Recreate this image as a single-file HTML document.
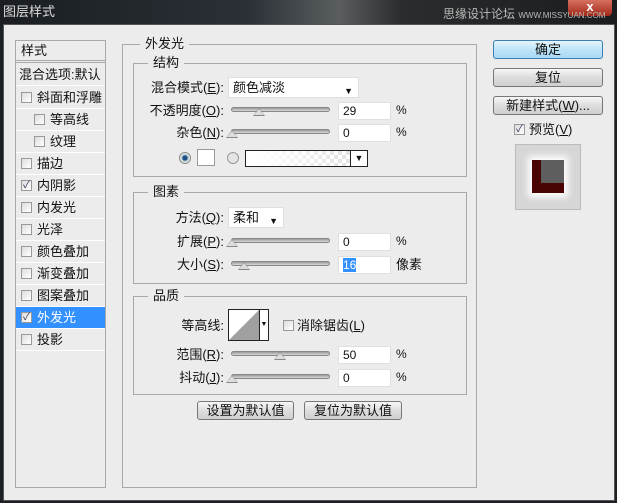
<!DOCTYPE html>
<html><head><meta charset="utf-8"><style>
*{box-sizing:border-box;margin:0;padding:0}
body{width:617px;height:503px;overflow:hidden;background:#1c2024;font-family:"Liberation Sans","Noto Sans CJK SC",sans-serif;font-size:13px;line-height:15px;color:#111;position:relative}
.a{position:absolute}
.title{left:0;top:0;width:617px;height:26px;background:linear-gradient(90deg,#1a1e22 0,#2a3036 40%,#5a5e60 55%,#2a2c2e 65%,#1a1c1e 100%)}
.dlg{left:3px;top:24px;width:612px;height:477px;background:#ececec;border:1px solid #555}
.gb{border:1px solid #a8a8a8}
.lbl{background:#ececec;padding:0 5px;line-height:14px}
.in{background:#fff;border:1px solid #e0e0e0;height:18px;line-height:17px;padding-left:4px;font-size:12px}
.sl{height:5px;border-radius:3px;background:linear-gradient(#9a9a9a,#d8d8d8);border:1px solid #888}
.th{width:0;height:0;border-left:6px solid transparent;border-right:6px solid transparent;border-bottom:8px solid #888}
.th:after{content:"";position:absolute;left:-5px;top:1px;border-left:5px solid transparent;border-right:5px solid transparent;border-bottom:6px solid #ddd}
.cb{width:11px;height:11px;border:1px solid #999;background:linear-gradient(135deg,#ddd,#fff);font-size:10px;line-height:9px;text-align:center;color:#335}
.row{left:0;width:89px;height:22px;border-bottom:1px solid #fff;line-height:22px}
.btn{border:1px solid #777;border-radius:3px;background:linear-gradient(#f6f6f6,#ddd 50%,#cfcfcf);text-align:center;line-height:17px;height:19px}
.r{text-align:right}
</style></head><body>
<div class="a title"></div>
<div class="a" style="left:3px;top:4px;color:#ddd;font-size:13px">图层样式</div>
<div class="a" style="left:568px;top:0;width:44px;height:16px;background:linear-gradient(#d87060,#a02818);border-radius:0 0 4px 4px;color:#fff;text-align:center;font-weight:bold;line-height:14px">x</div>
<div class="a" style="left:443px;top:7px;color:#bbb;font-size:12px">思缘设计论坛 <span style="font-size:8px">WWW.MISSYUAN.COM</span></div>
<div class="a dlg"></div>

<!-- left list -->
<div class="a gb" style="left:15px;top:40px;width:91px;height:448px;background:#ececec">
 <div class="a" style="left:0;top:0;width:89px;height:22px;line-height:20px;padding-left:5px;border-bottom:3px double #aaa">样式</div>
 <div class="a row" style="top:23px;padding-left:3px;line-height:22px">混合选项:默认</div>
 <div class="a row" style="top:46px"><span class="a cb" style="left:5px;top:5px"></span><span class="a" style="left:21px">斜面和浮雕</span></div>
 <div class="a row" style="top:68px"><span class="a cb" style="left:18px;top:5px"></span><span class="a" style="left:34px">等高线</span></div>
 <div class="a row" style="top:90px"><span class="a cb" style="left:18px;top:5px"></span><span class="a" style="left:34px">纹理</span></div>
 <div class="a row" style="top:112px"><span class="a cb" style="left:5px;top:5px"></span><span class="a" style="left:21px">描边</span></div>
 <div class="a row" style="top:134px"><span class="a cb" style="left:5px;top:5px">✓</span><span class="a" style="left:21px">内阴影</span></div>
 <div class="a row" style="top:156px"><span class="a cb" style="left:5px;top:5px"></span><span class="a" style="left:21px">内发光</span></div>
 <div class="a row" style="top:178px"><span class="a cb" style="left:5px;top:5px"></span><span class="a" style="left:21px">光泽</span></div>
 <div class="a row" style="top:200px"><span class="a cb" style="left:5px;top:5px"></span><span class="a" style="left:21px">颜色叠加</span></div>
 <div class="a row" style="top:222px"><span class="a cb" style="left:5px;top:5px"></span><span class="a" style="left:21px">渐变叠加</span></div>
 <div class="a row" style="top:244px"><span class="a cb" style="left:5px;top:5px"></span><span class="a" style="left:21px">图案叠加</span></div>
 <div class="a row" style="top:266px;background:#3390ff;color:#fff"><span class="a cb" style="left:5px;top:5px">✓</span><span class="a" style="left:21px">外发光</span></div>
 <div class="a row" style="top:288px"><span class="a cb" style="left:5px;top:5px"></span><span class="a" style="left:21px">投影</span></div>
</div>

<!-- main group -->
<div class="a gb" style="left:122px;top:44px;width:355px;height:444px"></div>
<div class="a lbl" style="left:140px;top:37px">外发光</div>

<div class="a gb" style="left:133px;top:63px;width:334px;height:114px"></div>
<div class="a lbl" style="left:148px;top:56px">结构</div>
<div class="a r" style="left:130px;top:80px;width:94px">混合模式(<u>E</u>):</div>
<div class="a in" style="left:228px;top:77px;width:131px;height:21px;line-height:20px;font-size:13px">颜色减淡<span class="a" style="right:5px;top:3px;font-size:9px">▼</span></div>
<div class="a r" style="left:130px;top:103px;width:94px">不透明度(<u>O</u>):</div>
<div class="a sl" style="left:231px;top:107px;width:99px"></div><div class="a th" style="left:253px;top:108px"></div>
<div class="a in" style="left:338px;top:102px;width:53px">29</div><div class="a" style="left:396px;top:103px;font-size:12px">%</div>
<div class="a r" style="left:130px;top:125px;width:94px">杂色(<u>N</u>):</div>
<div class="a sl" style="left:231px;top:129px;width:99px"></div><div class="a th" style="left:226px;top:130px"></div>
<div class="a in" style="left:338px;top:124px;width:53px">0</div><div class="a" style="left:396px;top:125px;font-size:12px">%</div>
<div class="a" style="left:179px;top:152px;width:12px;height:12px;border-radius:50%;border:1px solid #888;background:radial-gradient(#1a4f8a 30%,#8ab 40%,#eee 60%)"></div>
<div class="a" style="left:197px;top:149px;width:18px;height:17px;background:#fff;border:1px solid #999"></div>
<div class="a" style="left:227px;top:152px;width:12px;height:12px;border-radius:50%;border:1px solid #999;background:#e4e4e4"></div>
<div class="a" style="left:245px;top:150px;width:123px;height:17px;border:1px solid #222;background:linear-gradient(90deg,#fff 10%,rgba(255,255,255,0)),repeating-conic-gradient(#ddd 0 25%,#fff 0 50%) 0 0/8px 8px"><div class="a" style="right:0;top:0;width:17px;height:15px;background:#fff;border-left:1px solid #222;font-size:9px;text-align:center;line-height:15px">▼</div></div>

<div class="a gb" style="left:133px;top:192px;width:334px;height:92px"></div>
<div class="a lbl" style="left:148px;top:185px">图素</div>
<div class="a r" style="left:130px;top:210px;width:94px">方法(<u>Q</u>):</div>
<div class="a in" style="left:228px;top:207px;width:56px;height:21px;line-height:20px;font-size:13px">柔和<span class="a" style="right:5px;top:3px;font-size:9px">▼</span></div>
<div class="a r" style="left:130px;top:234px;width:94px">扩展(<u>P</u>):</div>
<div class="a sl" style="left:231px;top:238px;width:99px"></div><div class="a th" style="left:226px;top:239px"></div>
<div class="a in" style="left:338px;top:233px;width:53px">0</div><div class="a" style="left:396px;top:234px;font-size:12px">%</div>
<div class="a r" style="left:130px;top:257px;width:94px">大小(<u>S</u>):</div>
<div class="a sl" style="left:231px;top:261px;width:99px"></div><div class="a th" style="left:238px;top:262px"></div>
<div class="a in" style="left:338px;top:256px;width:53px"><span style="background:#3390ff;color:#fff">16</span></div><div class="a" style="left:396px;top:257px">像素</div>

<div class="a gb" style="left:133px;top:296px;width:334px;height:99px"></div>
<div class="a lbl" style="left:148px;top:289px">品质</div>
<div class="a r" style="left:130px;top:318px;width:94px">等高线:</div>
<div class="a" style="left:228px;top:309px;width:41px;height:32px;border:1px solid #222;background:#fff">
<svg class="a" style="left:0;top:0" width="30" height="30"><polygon points="0,30 30,0 30,30" fill="#a0a0a0"/></svg>
<div class="a" style="left:30px;top:0;width:9px;height:30px;border-left:1px solid #222;font-size:7px;line-height:30px;text-align:center">▼</div></div>
<div class="a cb" style="left:283px;top:320px"></div><div class="a" style="left:297px;top:318px">消除锯齿(<u>L</u>)</div>
<div class="a r" style="left:130px;top:347px;width:94px">范围(<u>R</u>):</div>
<div class="a sl" style="left:231px;top:351px;width:99px"></div><div class="a th" style="left:274px;top:352px"></div>
<div class="a in" style="left:338px;top:346px;width:53px">50</div><div class="a" style="left:396px;top:347px;font-size:12px">%</div>
<div class="a r" style="left:130px;top:370px;width:94px">抖动(<u>J</u>):</div>
<div class="a sl" style="left:231px;top:374px;width:99px"></div><div class="a th" style="left:226px;top:375px"></div>
<div class="a in" style="left:338px;top:369px;width:53px">0</div><div class="a" style="left:396px;top:370px;font-size:12px">%</div>

<div class="a btn" style="left:197px;top:401px;width:97px">设置为默认值</div>
<div class="a btn" style="left:304px;top:401px;width:98px">复位为默认值</div>

<!-- right -->
<div class="a btn" style="left:493px;top:40px;width:110px;border-color:#3c7fb1;background:linear-gradient(#e6f4fc,#bfe4f7 50%,#a7d9f5)">确定</div>
<div class="a btn" style="left:493px;top:68px;width:110px">复位</div>
<div class="a btn" style="left:493px;top:96px;width:110px">新建样式(<u>W</u>)...</div>
<div class="a cb" style="left:514px;top:124px">✓</div><div class="a" style="left:529px;top:122px">预览(<u>V</u>)</div>
<div class="a" style="left:515px;top:144px;width:66px;height:66px;background:#d6d6d6;border:1px solid #bbb">
<div class="a" style="left:16px;top:15px;width:32px;height:33px;background:#4a0303;box-shadow:0 0 7px 4px #fff"><div class="a" style="right:0;top:0;width:23px;height:23px;background:#5e5e5e"></div></div></div>
</body></html>
